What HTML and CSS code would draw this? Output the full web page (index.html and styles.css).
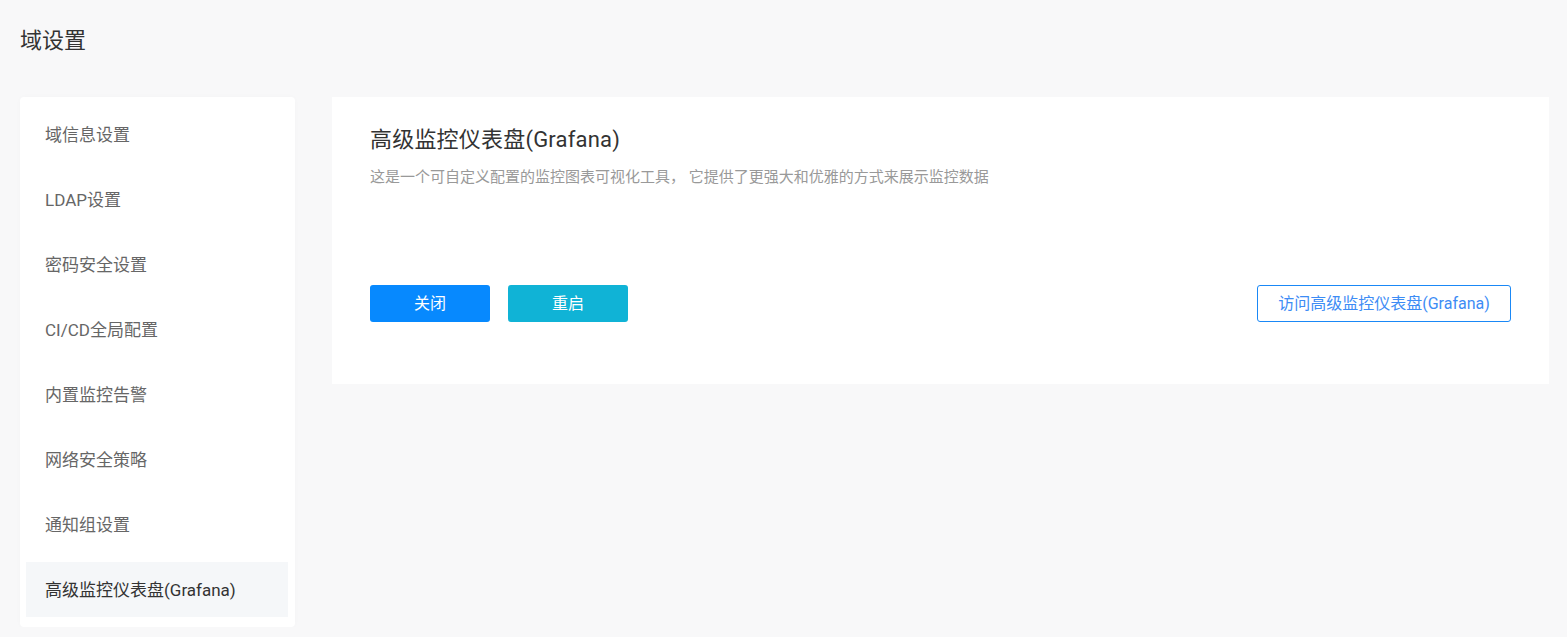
FILE: index.html
```html
<!DOCTYPE html>
<html lang="zh-CN">
<head>
  <meta charset="UTF-8" />
  <meta name="viewport" content="width=device-width, initial-scale=1.0"/>
  <title>域设置</title>
  <link rel="stylesheet" href="styles.css">
</head>
<body>

  <h1 class="page-title">域设置</h1>

  <div class="layout">
    <ul class="side-menu">
      <li class="menu-item">域信息设置</li>
      <li class="menu-item">LDAP设置</li>
      <li class="menu-item">密码安全设置</li>
      <li class="menu-item">CI/CD全局配置</li>
      <li class="menu-item">内置监控告警</li>
      <li class="menu-item">网络安全策略</li>
      <li class="menu-item">通知组设置</li>
      <li class="menu-item active">高级监控仪表盘(Grafana)</li>
    </ul>

    <div class="panel">
      <h2 class="panel-title">高级监控仪表盘(Grafana)</h2>
      <p class="panel-desc">这是一个可自定义配置的监控图表可视化工具， 它提供了更强大和优雅的方式来展示监控数据</p>

      <div class="actions">
        <button class="btn btn-primary">关闭</button>
        <button class="btn btn-info">重启</button>
        <button class="btn btn-outline">访问高级监控仪表盘(Grafana)</button>
      </div>
    </div>
  </div>

</body>
</html>
```

FILE: styles.css
```css
body {
  margin: 0;
  background: #f8f8f9;
  font-family: Roboto, "Noto Sans CJK SC", sans-serif;
  color: #333;
}

.page-title {
  margin: 0;
  padding: 26px 20px 0;
  height: 72px;
  box-sizing: border-box;
  font-size: 22px;
  font-weight: normal;
  line-height: 30px;
  color: #333;
}

.layout {
  display: flex;
  align-items: flex-start;
  gap: 37px;
  padding: 25px 18px 0 20px;
}

.side-menu {
  list-style: none;
  margin: 0;
  padding: 10px 7px 10px 6px;
  width: 275px;
  box-sizing: border-box;
  flex-shrink: 0;
  background: #fff;
  border-radius: 4px;
  box-shadow: 0 0 6px rgba(0, 0, 0, 0.02);
}

.menu-item {
  height: 55px;
  line-height: 57px;
  padding-left: 19px;
  margin-bottom: 10px;
  font-size: 17px;
  color: #666;
  cursor: pointer;
}

.menu-item:last-child {
  margin-bottom: 0;
}

.menu-item.active {
  background: #f5f7f9;
  color: #333;
}

.panel {
  flex: 1;
  background: #fff;
  padding: 28px 38px 62px;
}

.panel-title {
  margin: 0;
  font-size: 22px;
  font-weight: normal;
  line-height: 30px;
  letter-spacing: 0.2px;
  color: #333;
}

.panel-desc {
  margin: 11px 0 0;
  font-size: 15px;
  line-height: 22px;
  color: #999;
}

.actions {
  display: flex;
  gap: 18px;
  margin-top: 97px;
}

.btn {
  height: 37px;
  width: 120px;
  padding: 0 0 3px;
  border: none;
  border-radius: 3px;
  font-family: inherit;
  font-size: 16px;
  color: #fff;
  cursor: pointer;
}

.btn-primary {
  background: #0789fe;
}

.btn-info {
  background: #10b3d6;
}

.btn-outline {
  margin-left: auto;
  width: 254px;
  background: #fff;
  border: 1px solid #1a88f6;
  color: #3d8cf5;
}
```
